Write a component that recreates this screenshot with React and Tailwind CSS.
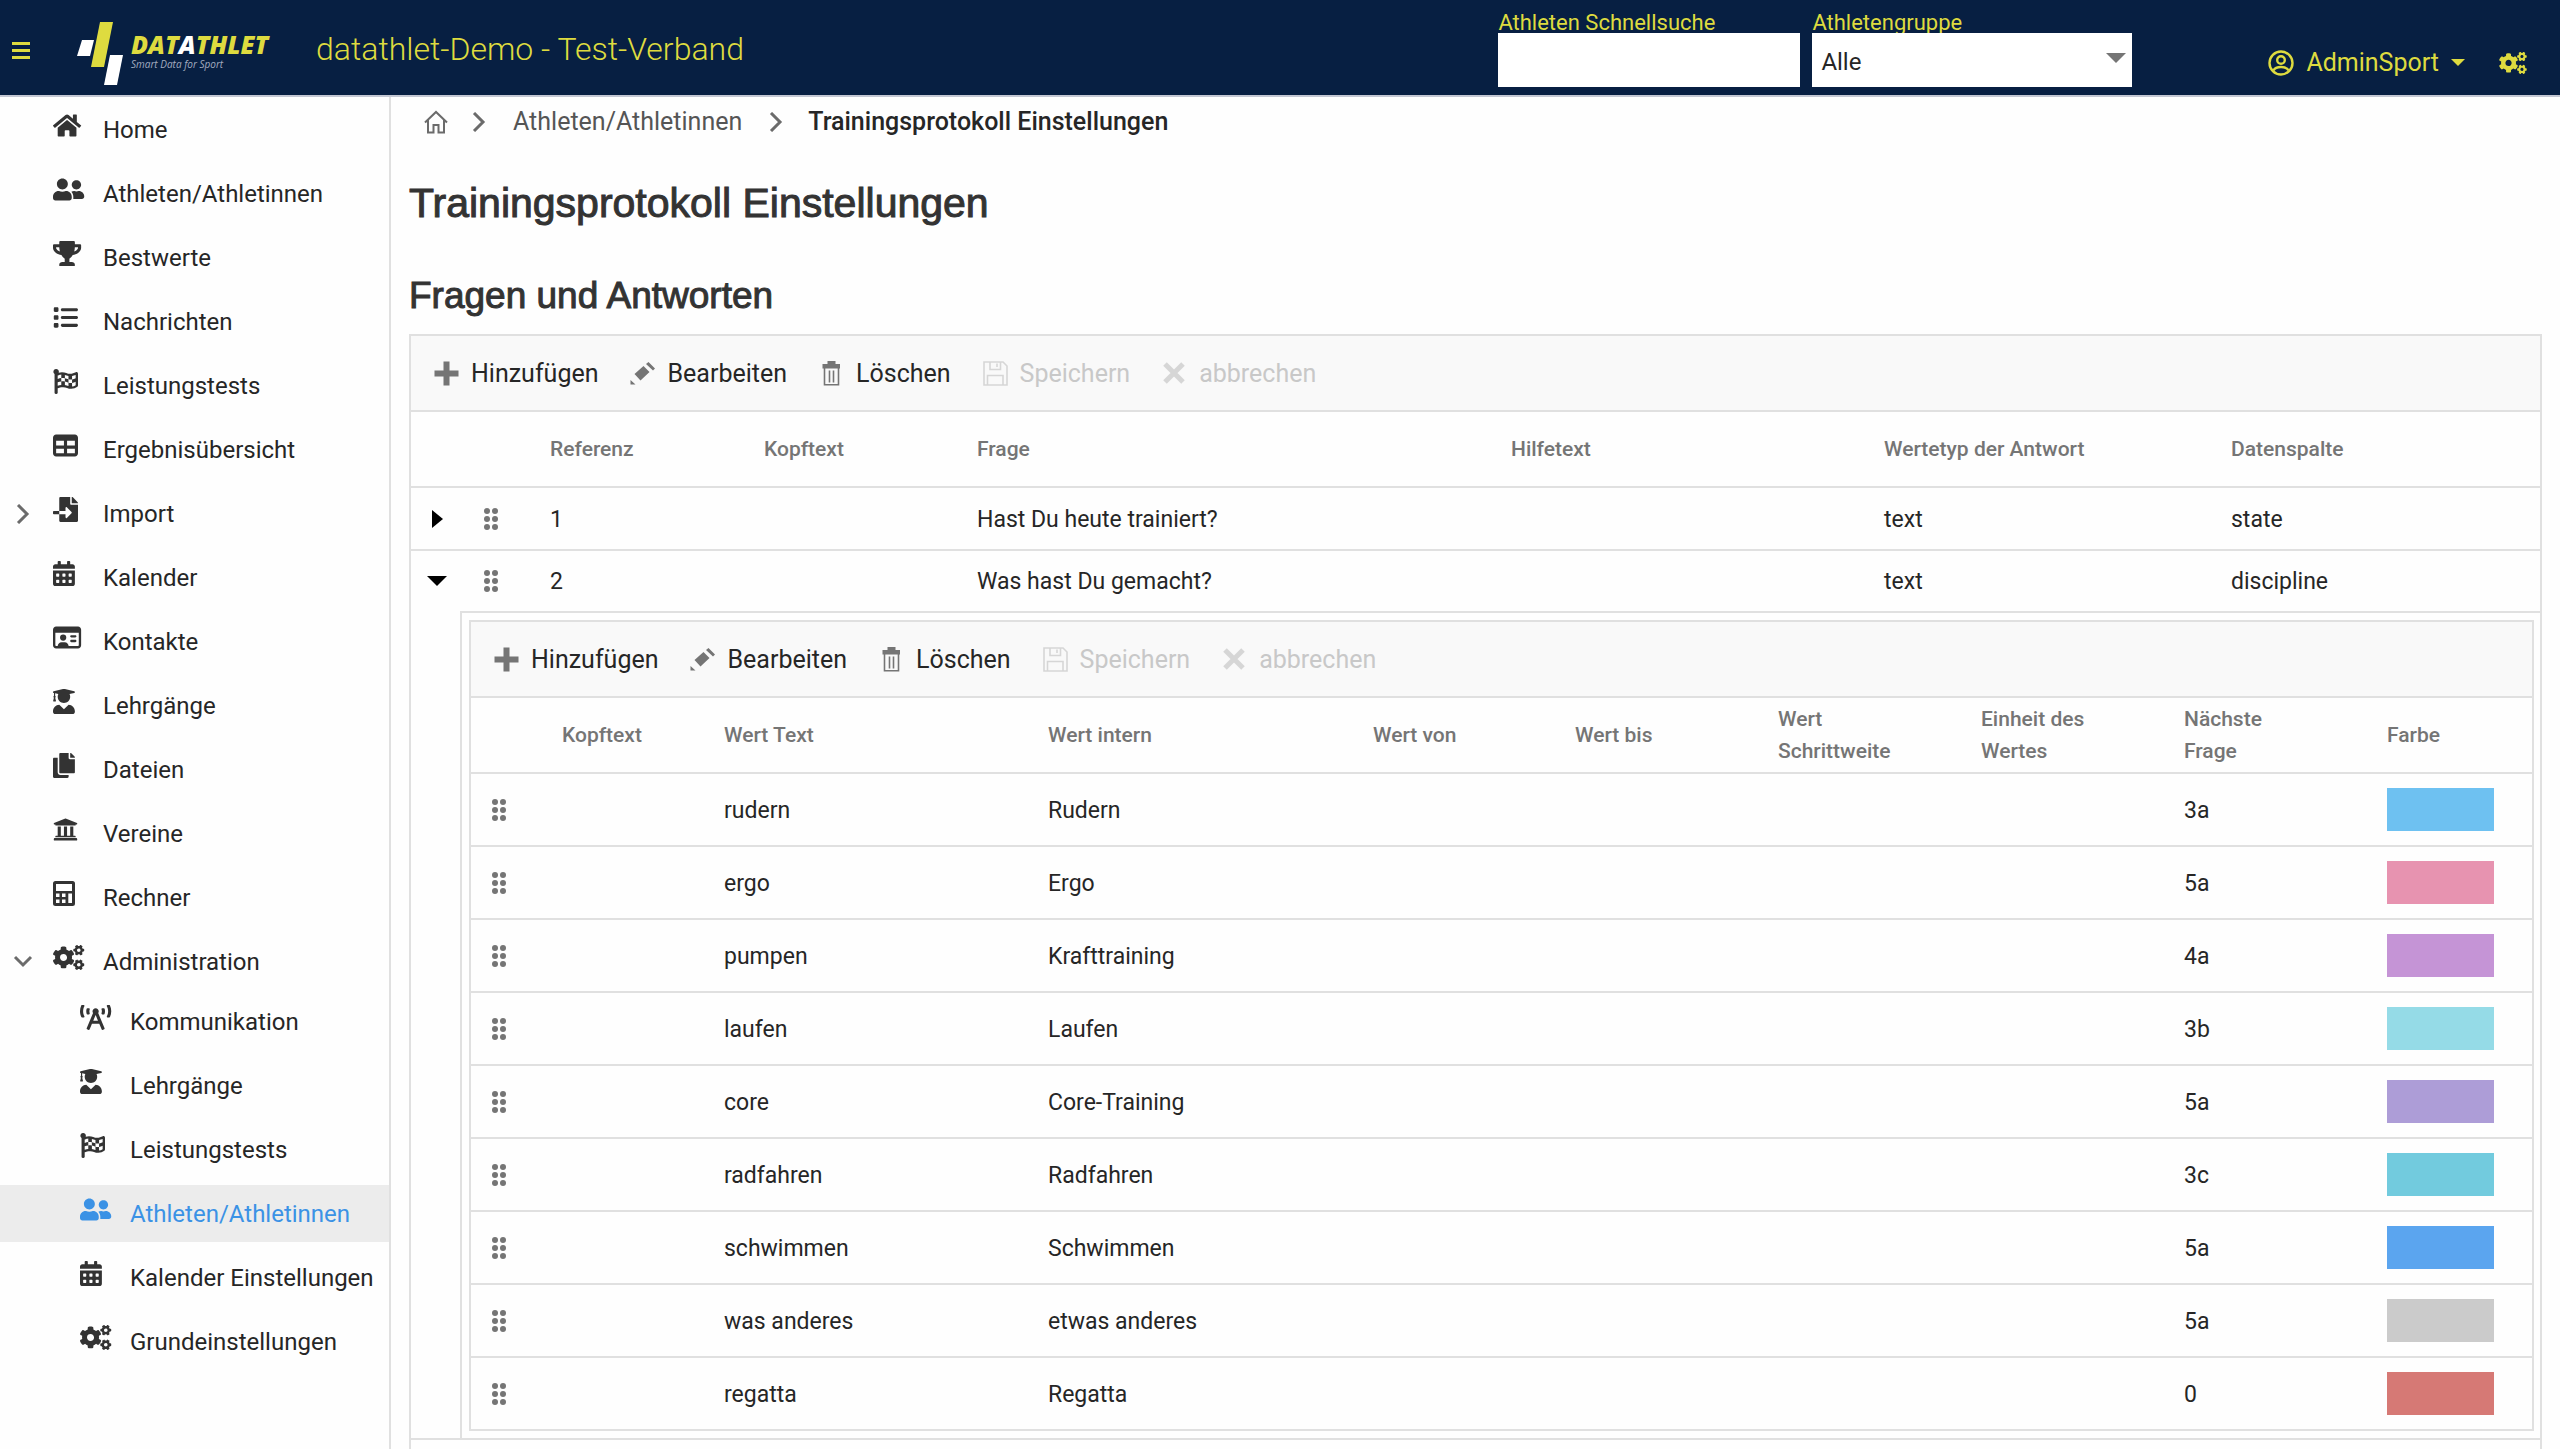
import {
  FaHome, FaUserFriends, FaTrophy, FaFlagCheckered, FaFileImport, FaCalendarAlt,
  FaUserGraduate, FaCopy, FaUniversity, FaCogs, FaBroadcastTower,
} from "react-icons/fa";
import { FaList, FaTable, FaRegIdCard } from "react-icons/fa6";

function CalculatorIcon(props) {
  return (
    <svg viewBox="0 0 22 25" fill="currentColor" {...props}>
      <path
        fillRule="evenodd"
        d="M2.500 0h17A2.500 2.500 0 0 1 22 2.500v20a2.500 2.500 0 0 1-2.500 2.500h-17A2.500 2.500 0 0 1 0 22.500v-20A2.500 2.500 0 0 1 2.500 0zM3 3v7h16V3zM3 12.500v3.500h3.500v-3.500zM9 12.500v3.500h3.500v-3.500zM3 18.500V22h3.500v-3.500zM9 18.500V22h3.500v-3.500zM15.300 12.500V22H19v-9.500z"
      />
    </svg>
  );
}

const navItems = [
  { label: "Home", icon: FaHome },
  { label: "Athleten/Athletinnen", icon: FaUserFriends },
  { label: "Bestwerte", icon: FaTrophy },
  { label: "Nachrichten", icon: FaList },
  { label: "Leistungstests", icon: FaFlagCheckered },
  { label: "Ergebnisübersicht", icon: FaTable },
  { label: "Import", icon: FaFileImport, state: "closed" },
  { label: "Kalender", icon: FaCalendarAlt },
  { label: "Kontakte", icon: FaRegIdCard },
  { label: "Lehrgänge", icon: FaUserGraduate },
  { label: "Dateien", icon: FaCopy },
  { label: "Vereine", icon: FaUniversity },
  { label: "Rechner", icon: CalculatorIcon },
  {
    label: "Administration",
    icon: FaCogs,
    state: "open",
    children: [
      { label: "Kommunikation", icon: FaBroadcastTower },
      { label: "Lehrgänge", icon: FaUserGraduate },
      { label: "Leistungstests", icon: FaFlagCheckered },
      { label: "Athleten/Athletinnen", icon: FaUserFriends, active: true },
      { label: "Kalender Einstellungen", icon: FaCalendarAlt },
      { label: "Grundeinstellungen", icon: FaCogs },
    ],
  },
];

const questionColumns = [
  { label: "", width: "w-[49px]" },
  { label: "", width: "w-[74px]" },
  { label: "Referenz", width: "w-[214px]" },
  { label: "Kopftext", width: "w-[213px]" },
  { label: "Frage", width: "w-[534px]" },
  { label: "Hilfetext", width: "w-[373px]" },
  { label: "Wertetyp der Antwort", width: "w-[347px]" },
  { label: "Datenspalte", width: "w-[326px]" },
];

const answerColumns = [
  { label: "", width: "w-[75px]" },
  { label: "Kopftext", width: "w-[162px]" },
  { label: "Wert Text", width: "w-[324px]" },
  { label: "Wert intern", width: "w-[325px]" },
  { label: "Wert von", width: "w-[202px]" },
  { label: "Wert bis", width: "w-[203px]" },
  { label: "Wert Schrittweite", width: "w-[203px]" },
  { label: "Einheit des Wertes", width: "w-[203px]" },
  { label: "Nächste Frage", width: "w-[203px]" },
  { label: "Farbe", width: "w-[162px]" },
];

const answers = [
  { text: "rudern", intern: "Rudern", next: "3a", color: "bg-[#6ec1f1]" },
  { text: "ergo", intern: "Ergo", next: "5a", color: "bg-[#e793b0]" },
  { text: "pumpen", intern: "Krafttraining", next: "4a", color: "bg-[#c594d6]" },
  { text: "laufen", intern: "Laufen", next: "3b", color: "bg-[#95dbe7]" },
  { text: "core", intern: "Core-Training", next: "5a", color: "bg-[#ad9dd7]" },
  { text: "radfahren", intern: "Radfahren", next: "3c", color: "bg-[#72cbde]" },
  { text: "schwimmen", intern: "Schwimmen", next: "5a", color: "bg-[#5ba5ef]" },
  { text: "was anderes", intern: "etwas anderes", next: "5a", color: "bg-[#cbcbcb]" },
  { text: "regatta", intern: "Regatta", next: "0", color: "bg-[#d67975]" },
];

function Logo() {
  return (
    <a href="#" aria-label="Datathlet" className="flex items-center gap-1.5">
      <svg viewBox="0 0 48 66" className="h-[66px] w-12">
        <path d="M5 19h12l-4 16H0z" fill="#fff" />
        <path d="M23 1h13l-9 45H14z" fill="#dedb3f" />
        <path d="M33 34h13l-6 30H27z" fill="#fff" />
      </svg>
      <span className="flex flex-col pb-2 font-['Open_Sans',sans-serif] italic">
        <span className="text-[25px] leading-7 font-extrabold text-[#dedb3f]">
          DAT<span className="text-white">A</span>THLET
        </span>
        <span className="text-[10px] leading-3 text-[#a3acc0]">Smart Data for Sport</span>
      </span>
    </a>
  );
}

function Chevron({ down }) {
  return (
    <svg viewBox="0 0 20 20" className="size-5" fill="none" stroke="#6b6b6b" strokeWidth="3">
      {down ? <path d="M2 5l8 8 8-8" /> : <path d="M5 1l9 9-9 9" />}
    </svg>
  );
}

function NavEntry({ item, nested }) {
  const Icon = item.icon;
  return (
    <a
      href="#"
      className={`flex h-[57px] items-center ${item.active ? "bg-[#ececec] text-[#3b92e5]" : "text-[#262626]"}`}
    >
      <span className={`flex shrink-0 items-center ${nested ? "w-20" : "w-[53px] pl-[13px]"}`}>
        {item.state && <Chevron down={item.state === "open"} />}
      </span>
      <span className="mb-2 w-[50px] shrink-0">
        <Icon
          preserveAspectRatio="xMinYMid meet"
          className={`h-[25px] w-8 ${item.active ? "" : "text-[#333]"}`}
        />
      </span>
      <span className="whitespace-nowrap">{item.label}</span>
    </a>
  );
}

function Sidebar() {
  return (
    <nav className="w-[391px] shrink-0 border-r-2 border-[#e0e0e0] pt-1 text-[24px] leading-8">
      <ul className="flex flex-col gap-[7px]">
        {navItems.map((item) => (
          <li key={item.label}>
            <NavEntry item={item} />
            {item.children && (
              <ul className="mt-[3px] flex flex-col gap-[7px]">
                {item.children.map((child) => (
                  <li key={child.label}>
                    <NavEntry item={child} nested />
                  </li>
                ))}
              </ul>
            )}
          </li>
        ))}
      </ul>
    </nav>
  );
}

function PlusIcon() {
  return (
    <svg viewBox="0 0 25 25" className="size-[25px]" fill="currentColor">
      <path d="M9.500 0.500h6v9h9v6h-9v9h-6v-9h-9v-6h9z" />
    </svg>
  );
}

function PencilIcon() {
  return (
    <svg viewBox="0 0 25 25" className="size-[25px]" fill="currentColor">
      <path d="M13.500 5l6 6-9 8.500-6-6.500zM16 3l2.500-2 6.500 6.500-2 2zM0.500 19l5 4.500H0.500z" />
    </svg>
  );
}

function TrashIcon() {
  return (
    <svg viewBox="0 0 25 25" className="size-[25px]">
      <path d="M8.500 0h8v3H21v4.500H3.500V3h5z" fill="currentColor" />
      <path d="M5.500 7v16.800h14V7M10.500 9.500v12M14.500 9.500v12" fill="none" stroke="currentColor" strokeWidth="1.600" />
    </svg>
  );
}

function SaveIcon() {
  return (
    <svg viewBox="0 0 25 25" className="size-[25px]" fill="none" stroke="currentColor" strokeWidth="1.600">
      <path d="M1 1h19l4 4v19H1zM7 1v7.500h10.500V1M14 2.500V6M4.500 24v-9.500h15.500V24" />
    </svg>
  );
}

function CloseIcon() {
  return (
    <svg viewBox="0 0 25 25" className="size-[25px]" fill="none" stroke="currentColor" strokeWidth="5">
      <path d="M3 3l18 18M21 3L3 21" />
    </svg>
  );
}

const actions = [
  { label: "Hinzufügen", icon: PlusIcon },
  { label: "Bearbeiten", icon: PencilIcon },
  { label: "Löschen", icon: TrashIcon },
  { label: "Speichern", icon: SaveIcon, disabled: true },
  { label: "abbrechen", icon: CloseIcon, disabled: true },
];

function Toolbar() {
  return (
    <div className="flex h-[76px] items-center gap-8 border-b-2 border-[#e0e0e0] bg-[#f9f9f9] px-[23px] pt-0.5 text-[25px] leading-8">
      {actions.map(({ label, icon: Icon, disabled }) => (
        <button
          key={label}
          type="button"
          disabled={disabled}
          className={`flex items-center gap-3 ${disabled ? "text-[#c8c8c8]" : "text-[#262626]"}`}
        >
          <span className={`mb-0.5 ${disabled ? "text-[#d6d6d6]" : "text-[#757575]"}`}>
            <Icon />
          </span>
          {label}
        </button>
      ))}
    </div>
  );
}

function DragHandle() {
  return (
    <svg viewBox="0 0 16 22" className="mx-auto h-[22px] w-4" fill="#757575">
      {[3, 11, 19].map((y) => (
        <g key={y}>
          <circle cx="4" cy={y} r="3" />
          <circle cx="12" cy={y} r="3" />
        </g>
      ))}
    </svg>
  );
}

function GridHead({ columns }) {
  return (
    <>
      <colgroup>
        {columns.map((c, i) => (
          <col key={i} className={c.width} />
        ))}
      </colgroup>
      <thead>
        <tr className="h-[76px] text-left text-[21px] leading-8 text-[#757575]">
          {columns.map((c, i) => (
            <th key={i} scope="col" className="border-b-2 border-[#e0e0e0] pr-16 pl-4 font-medium">
              {c.label}
            </th>
          ))}
        </tr>
      </thead>
    </>
  );
}

function Cell({ children }) {
  return <td className="border-b-2 border-[#e0e0e0] px-4 pt-0.5">{children}</td>;
}

function AnswerGrid() {
  return (
    <div className="border-2 border-b-0 border-[#e0e0e0]">
      <Toolbar />
      <table className="w-full table-fixed border-separate border-spacing-0">
        <GridHead columns={answerColumns} />
        <tbody>
          {answers.map((a) => (
            <tr key={a.text} className="h-[73px]">
              <td className="border-b-2 border-[#e0e0e0] pr-5">
                <DragHandle />
              </td>
              <Cell />
              <Cell>{a.text}</Cell>
              <Cell>{a.intern}</Cell>
              <Cell />
              <Cell />
              <Cell />
              <Cell />
              <Cell>{a.next}</Cell>
              <td className="border-b-2 border-[#e0e0e0] px-4">
                <div className={`h-[43px] w-[107px] ${a.color}`} />
              </td>
            </tr>
          ))}
        </tbody>
      </table>
    </div>
  );
}

function QuestionRow({ number, text, type, column, open }) {
  return (
    <tr className={open ? "h-[62px]" : "h-[63px]"}>
      <td className={open ? "" : "border-b-2 border-[#e0e0e0]"}>
        <button type="button" aria-label={open ? "Zuklappen" : "Aufklappen"} className="ml-4 flex size-5 items-center justify-center">
          <svg viewBox="0 0 20 20" className="size-5">
            {open ? <path d="M0 4h20L10 14z" /> : <path d="M5 1v18l11-9z" />}
          </svg>
        </button>
      </td>
      <td className="border-b-2 border-[#e0e0e0] pr-3">
        <DragHandle />
      </td>
      <Cell>{number}</Cell>
      <Cell />
      <Cell>{text}</Cell>
      <Cell />
      <Cell>{type}</Cell>
      <Cell>{column}</Cell>
    </tr>
  );
}

function QuestionGrid() {
  return (
    <div className="mt-4 grow border-2 border-b-0 border-[#e0e0e0]">
      <Toolbar />
      <table className="w-full table-fixed border-separate border-spacing-0 text-[23px] leading-8 text-[#262626]">
        <GridHead columns={questionColumns} />
        <tbody>
          <QuestionRow number="1" text="Hast Du heute trainiert?" type="text" column="state" />
          <QuestionRow number="2" text="Was hast Du gemacht?" type="text" column="discipline" open />
          <tr>
            <td className="border-b-2 border-[#e0e0e0]" />
            <td colSpan={7} className="border-b-2 border-l-2 border-[#e0e0e0] p-[7px]">
              <AnswerGrid />
            </td>
          </tr>
        </tbody>
      </table>
    </div>
  );
}

function Header() {
  return (
    <header className="flex h-[97px] items-center border-b-2 border-[#c3c7d3] bg-[#071f42] pr-[33px] text-[#dedb3f]">
      <button type="button" aria-label="Menü" className="mt-1 mr-[47px] ml-3">
        <svg viewBox="0 0 18 18" className="size-[18px]" fill="currentColor">
          <path d="M0 1h18v3H0zM0 8h18v3H0zM0 15h18v3H0z" />
        </svg>
      </button>
      <div className="mt-3 w-[239px]">
        <Logo />
      </div>
      <div className="mt-0.5 grow text-[32px] leading-10 font-light">datathlet-Demo - Test-Verband</div>
      <div className="mt-1 flex gap-3 text-[22px] leading-5">
        <label className="flex w-[302px] flex-col">
          Athleten Schnellsuche
          <input type="text" className="h-[54px] w-full bg-white px-2 text-[24px] text-[#262626]" />
        </label>
        <label className="flex w-[320px] flex-col">
          Athletengruppe
          <span className="grid items-center">
            <select className="col-start-1 row-start-1 h-[54px] w-full appearance-none bg-white px-[9px] pt-1 text-[24px] text-[#262626]">
              <option>Alle</option>
            </select>
            <svg viewBox="0 0 20 10" className="pointer-events-none col-start-1 row-start-1 mr-1.5 mb-1 h-2.5 w-5 justify-self-end" fill="#757575">
              <path d="M0 0h20L10 10z" />
            </svg>
          </span>
        </label>
      </div>
      <button type="button" className="mt-[30px] ml-[136px] flex items-center gap-3 text-[25px] leading-8">
        <svg viewBox="0 0 26 26" className="size-[26px]" fill="none" stroke="currentColor" strokeWidth="2.400">
          <circle cx="13" cy="13" r="11.500" />
          <circle cx="13" cy="10" r="3.800" />
          <path d="M5.500 20.500c1.500-3 4-3.500 7.500-3.500s6 .5 7.500 3.500" />
        </svg>
        AdminSport
        <svg viewBox="0 0 14 7" className="h-[7px] w-3.5" fill="currentColor">
          <path d="M0 0h14L7 7z" />
        </svg>
      </button>
      <button type="button" aria-label="Einstellungen" className="mt-[30px] ml-[34px]">
        <FaCogs className="h-[22px] w-7" />
      </button>
    </header>
  );
}

function Breadcrumb() {
  return (
    <nav aria-label="Brotkrumen" className="flex h-[50px] items-center pl-3.5 text-[25px] leading-8 text-[#555]">
      <a href="#" aria-label="Start" className="mr-5">
        <svg viewBox="0 0 26 24" className="h-6 w-[26px]" fill="none" stroke="#6b6b6b" strokeWidth="2">
          <path d="M2 12.500L13 2l11 10.500M5 10v12.500h5.500V15h5v7.500H21V10" />
        </svg>
      </a>
      <Chevron />
      <a href="#" className="mx-6">Athleten/Athletinnen</a>
      <Chevron />
      <span aria-current="page" className="ml-[22px] font-medium text-[#262626]">Trainingsprotokoll Einstellungen</span>
    </nav>
  );
}

export default function App() {
  return (
    <div className="flex h-screen flex-col overflow-hidden bg-[#fefefe] font-[Roboto,sans-serif]">
      <Header />
      <div className="flex min-h-0 grow">
        <Sidebar />
        <main className="flex min-w-0 grow flex-col pr-[18px] pl-[18px] text-[#262626]">
          <Breadcrumb />
          <h1 className="mt-8 font-['Liberation_Sans',sans-serif] text-[41px] leading-[48px] text-[#333] [-webkit-text-stroke:1px]">
            Trainingsprotokoll Einstellungen
          </h1>
          <h2 className="mt-[47px] font-['Liberation_Sans',sans-serif] text-[37px] leading-[44px] text-[#333] [-webkit-text-stroke:1px]">
            Fragen und Antworten
          </h2>
          <QuestionGrid />
        </main>
      </div>
    </div>
  );
}
